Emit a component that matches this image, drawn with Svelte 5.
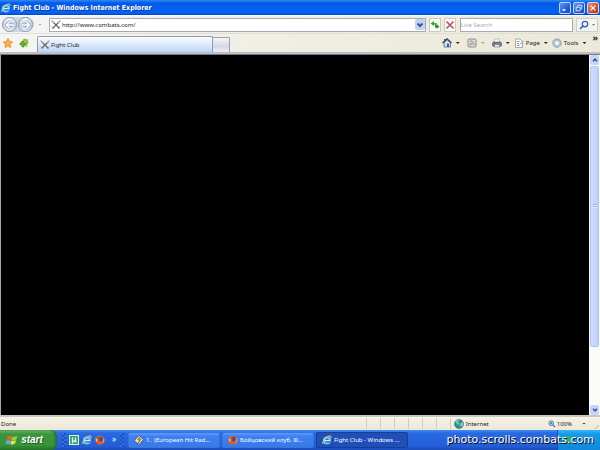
<script lang="ts">
  let address = $state("http://www.combats.com/");
  let query = $state("");

  const panes = [1, 2, 3, 4, 5, 6];

  const tasks = [
    { icon: "player", label: "1.  (European Hit Rad...", active: false },
    { icon: "fox", label: "Бойцовский клуб. Ф...", active: false },
    { icon: "ie", label: "Fight Club - Windows ...", active: true },
  ];
</script>

{#snippet icon(name: string)}
  <svg class="icon" viewBox="0 0 20 20" aria-hidden="true">
    {#if name === "ie"}
      <circle cx="10" cy="11" r="6" fill="none" stroke="#6cc5f5" stroke-width="4" />
      <path d="M5 11h11" stroke="#c9efff" stroke-width="3" />
      <path d="M12 14h6" stroke="#1c5fd0" stroke-width="2" />
      <path d="M2 18C-1 14 9 1 17 2c3 1 1 4 0 5" fill="none" stroke="#f2d65a" stroke-width="2" />
    {:else if name === "swords"}
      <path d="M2 2l15 15M18 2L3 17" stroke="#66655c" stroke-width="2.4" />
      <path d="M1 13l5 5M14 18l5-5" stroke="#a39b80" stroke-width="2" />
      <path d="M1 1l5 5M19 1l-5 5" stroke="#a9a99f" stroke-width="2" />
    {:else if name === "fox"}
      <circle cx="10" cy="10" r="9" fill="#e4671b" />
      <circle cx="11" cy="8" r="5" fill="#3d55a5" />
      <path d="M2 4c1 3 4 2 7 4-3 0-3 4 0 5s6 0 8-5c2 6-2 11-8 11S-1 12 2 4z" fill="#e9571c" />
      <path d="M2 5c0 3 2 4 4 4l-2 5C1 12 1 8 2 5zM17 5c3 5 1 10-2 12 2-4 2-7 2-12z" fill="#ffc044" />
    {:else if name === "player"}
      <path d="M10 1l9 8-9 10-9-8z" fill="#f0eadb" stroke="#534b43" stroke-width="1.5" />
      <path d="M12 3L7 10h4l-3 7 7-9h-4z" fill="#ed9c22" stroke="#6e4b25" />
    {:else if name === "flag"}
      <path d="M3 4c3-2 5-1 7 0L8 10c-2-1-4-1-7 0z" fill="#ee6332" />
      <path d="M11 4c3 1 5 1 8-1l-2 6c-3 2-5 2-8 1z" fill="#8dd64a" />
      <path d="M1 11c3-1 5-1 7 0l-2 6c-2-1-4-1-6 0z" fill="#6ba9f5" />
      <path d="M9 11c3 1 5 1 8-1l-2 6c-3 2-5 2-8 1z" fill="#fbd743" />
    {:else if name === "star"}
      <path d="M10 1l3 6 6 1-5 5 1 6-5-3-6 3 1-6-4-5 6-1z" fill="#ffb53b" stroke="#d9811b" stroke-width="1.5" />
    {:else if name === "addstar"}
      <path d="M12 1l2 6 5 1-4 4 1 6-5-3-5 3 1-6-4-4 6-1z" fill="#f3cb46" stroke="#b1a12b" />
      <path d="M6 6v4H2v4h4v4h4v-4h4v-4h-4V6z" fill="#55b72e" stroke="#338a22" />
      <path d="M8 4h8v9" fill="none" stroke="#6cc13b" stroke-width="3" />
    {:else if name === "home"}
      <path d="M4 9v9h13V8l-6-5z" fill="#d6e1f2" stroke="#46608c" stroke-width="1.5" />
      <path d="M1 10l9-8 9 8" fill="none" stroke="#34496e" stroke-width="3" />
      <path d="M4 2h3v5H4z" fill="#445b83" />
      <path d="M10 11h4v7h-4z" fill="#405b91" />
    {:else if name === "feed"}
      <rect x="2" y="2" width="16" height="16" rx="2" fill="#dedfda" stroke="#8b8e8b" stroke-width="2" />
      <path d="M6 6c5 0 8 3 8 8M6 10c3 0 4 2 4 4" fill="none" stroke="#858885" stroke-width="2" />
      <circle cx="6.5" cy="14" r="1.5" fill="#858885" />
    {:else if name === "print"}
      <path d="M5 2h9l1 7H4z" fill="#fff" stroke="#858f9e" />
      <path d="M2 8h16l2 6-3 3H3l-3-3z" fill="#777f8c" stroke="#424a57" />
      <path d="M5 13h10v5H5z" fill="#e6ebf3" stroke="#596273" />
    {:else if name === "page"}
      <path d="M3 2h9l5 5v12H3z" fill="#fafbf9" stroke="#899397" stroke-width="1.5" />
      <path d="M6 7h5M6 11h4M6 15h5" stroke="#839bb5" stroke-width="2" />
      <path d="M19 5l-7 8" stroke="#899aac" stroke-width="2" />
    {:else if name === "gear"}
      <circle cx="10" cy="10" r="7" fill="#e5ebf2" stroke="#a3b4c6" stroke-width="3.5" />
      <circle cx="10" cy="10" r="9" fill="none" stroke="#8c9bad" stroke-width="1.5" stroke-dasharray="3 2" />
      <circle cx="10" cy="10" r="4" fill="#fff" stroke="#a4b1be" />
    {:else if name === "globe"}
      <circle cx="10" cy="10" r="9" fill="#2e89ae" stroke="#2a5f82" />
      <path d="M3 5c3-4 8-3 8-2L8 6l3 3-3 3-4-4zM13 8l5-2v7l-4 3-3-4z" fill="#7dc997" />
    {:else if name === "zoom"}
      <circle cx="8" cy="8" r="6" fill="#c8e0f8" stroke="#426b9f" stroke-width="2" />
      <path d="M12 12l6 6" stroke="#526381" stroke-width="3" />
      <path d="M8 5v6M5 8h6" stroke="#2460b0" stroke-width="2" />
    {:else if name === "search"}
      <circle cx="12" cy="8" r="5.5" fill="#edf6ff" stroke="#2b65b4" stroke-width="2.5" />
      <path d="M8 12l-6 6" stroke="#2b65b4" stroke-width="3.5" />
    {:else if name === "refresh"}
      <path d="M8 2L1 7l7 5V9h2v3h3V6H8z" fill="#38a13a" />
      <path d="M13 8l6 5-6 5v-3h-3v-3h3z" fill="#288931" />
    {:else if name === "stop"}
      <path d="M3 3l14 14M17 3L3 17" stroke="#bd4660" stroke-width="3" />
    {:else if name === "torrent"}
      <rect x="1" y="1" width="18" height="18" fill="#35a467" stroke="#d8f5db" stroke-width="2" />
      <path d="M7 5v12M7 12h6M13 5v8h2" fill="none" stroke="#fff" stroke-width="2.5" />
    {:else if name === "down"}
      <path d="M5 7l5 5 5-5" fill="none" stroke="#3f5789" stroke-width="4" />
    {:else if name === "up"}
      <path d="M5 13l5-5 5 5" fill="none" stroke="#3f5789" stroke-width="4" />
    {:else if name === "back"}
      <path d="M10 3l-7 7 7 7M4 10h14" fill="none" stroke="#8fa3bf" stroke-width="6" />
      <path d="M10 3l-7 7 7 7M4 10h14" fill="none" stroke="#fff" stroke-width="3" />
    {:else if name === "forward"}
      <path d="M10 3l7 7-7 7M16 10H2" fill="none" stroke="#8fa3bf" stroke-width="6" />
      <path d="M10 3l7 7-7 7M16 10H2" fill="none" stroke="#fff" stroke-width="3" />
    {:else if name === "minimize"}
      <path d="M4 15h7" stroke="#fff" stroke-width="4" />
    {:else if name === "restore"}
      <path d="M7 6V3h10v9h-3M3 8h10v9H3z" fill="none" stroke="#fff" stroke-width="2" />
    {:else if name === "close"}
      <path d="M4 4l12 12M16 4L4 16" stroke="#fff" stroke-width="3" />
    {/if}
  </svg>
{/snippet}

<div class="desktop">
  <header class="titlebar">
    {@render icon("ie")}
    <h1>Fight Club - Windows Internet Explorer</h1>
    <div class="window-buttons">
      <button aria-label="Minimize">{@render icon("minimize")}</button>
      <button aria-label="Restore">{@render icon("restore")}</button>
      <button class="close" aria-label="Close">{@render icon("close")}</button>
    </div>
  </header>

  <div class="chrome">
    <div class="navigation">
      <div class="history">
        <button aria-label="Back">{@render icon("back")}</button>
        <button aria-label="Forward">{@render icon("forward")}</button>
      </div>
      <button class="arrow pale" aria-label="Recent pages"></button>
      <div class="field address">
        {@render icon("swords")}
        <input aria-label="Address" bind:value={address} />
        <button class="drop" aria-label="Show addresses">{@render icon("down")}</button>
      </div>
      <button class="square" aria-label="Refresh">{@render icon("refresh")}</button>
      <button class="square" aria-label="Stop">{@render icon("stop")}</button>
      <div class="field search">
        <input aria-label="Live Search" placeholder="Live Search" bind:value={query} />
      </div>
      <div class="go">
        <button aria-label="Search">{@render icon("search")}</button>
        <button class="arrow" aria-label="Search options"></button>
      </div>
    </div>

    <div class="tabs">
      <div class="favorites">
        <button aria-label="Favorites">{@render icon("star")}</button>
        <button aria-label="Add to favorites">{@render icon("addstar")}</button>
      </div>
      <button class="tab">{@render icon("swords")}Fight Club</button>
      <button class="new-tab" aria-label="New tab"></button>
      <div class="commands">
        <button aria-label="Home">{@render icon("home")}<i class="arrow"></i></button>
        <button aria-label="Feeds">{@render icon("feed")}<i class="arrow pale"></i></button>
        <button aria-label="Print">{@render icon("print")}<i class="arrow"></i></button>
        <button class="named">{@render icon("page")}Page<i class="arrow"></i></button>
        <button class="named">{@render icon("gear")}Tools<i class="arrow"></i></button>
      </div>
      <button class="more" aria-label="More commands">»</button>
    </div>
  </div>

  <div class="view">
    <main aria-label="Fight Club"></main>
    <div class="scrollbar">
      <button aria-label="Scroll up">{@render icon("up")}</button>
      <div class="track"><div class="thumb"><span></span></div></div>
      <button aria-label="Scroll down">{@render icon("down")}</button>
    </div>
  </div>

  <div class="status">
    <span class="message">Done</span>
    {#each panes as pane (pane)}
      <span class="pane"></span>
    {/each}
    <span class="zone">{@render icon("globe")}Internet</span>
    <button class="zoom">{@render icon("zoom")}100%<i class="arrow"></i></button>
    <span class="resize"></span>
  </div>

  <footer class="taskbar">
    <button class="start">{@render icon("flag")}start</button>
    <span class="grip"></span>
    <div class="quick">
      <button aria-label="Torrent">{@render icon("torrent")}</button>
      <button aria-label="Internet Explorer">{@render icon("ie")}</button>
      <button aria-label="Firefox">{@render icon("fox")}</button>
      <button class="chevron" aria-label="More programs">»</button>
    </div>
    <span class="grip"></span>
    <div class="tasks">
      {#each tasks as task (task.label)}
        <button class="task" class:active={task.active}>
          {@render icon(task.icon)}<span>{task.label}</span>
        </button>
      {/each}
    </div>
    <div class="tray"><span></span></div>
    <span class="watermark">photo.scrolls.combats.com</span>
  </footer>
</div>

<style>
  :global(body) {
    margin: 0;
  }

  .desktop {
    display: flex;
    flex-direction: column;
    min-height: 100vh;
    font: 6px/8px "Noto Sans", sans-serif;
    color: #20201e;
    background: #eeebdc;
  }

  .desktop * {
    box-sizing: border-box;
  }

  button,
  input {
    margin: 0;
    padding: 0;
    border: 0;
    font: inherit;
    color: inherit;
    background: none;
  }

  button {
    display: flex;
    align-items: center;
    justify-content: center;
    flex: none;
    white-space: nowrap;
  }

  input {
    flex: 1;
    min-width: 0;
    height: 10px;
    outline: 0;
  }

  .icon {
    display: block;
    flex: none;
    width: 10px;
    height: 10px;
  }

  .arrow {
    flex: none;
    width: 4px;
    height: 2px;
    background: #292929;
    clip-path: polygon(0 0, 100% 0, 50% 100%);
  }

  .pale {
    background: #a5a5a0;
  }

  .titlebar {
    display: flex;
    align-items: center;
    gap: 2px;
    height: 15px;
    padding: 0 1px;
    color: #fff;
    background: linear-gradient(#2d8bf8, #0559e4 20%, #0561f3 65%, #0561f7 88%, #0341b8);
  }

  h1 {
    flex: 1;
    margin: 0;
    font: bold 7px/10px "DejaVu Sans Condensed", "DejaVu Sans", sans-serif;
    text-shadow: 1px 1px #0b3c9b;
  }

  .window-buttons {
    display: flex;
    gap: 2px;
  }

  .window-buttons button {
    width: 12px;
    height: 12px;
    border: 1px solid #c1d5fa;
    border-radius: 2px;
    background: linear-gradient(135deg, #659af5, #245fd9 60%, #1649bb);
  }

  .window-buttons .icon {
    width: 8px;
    height: 8px;
  }

  .window-buttons .close {
    background: linear-gradient(135deg, #ef9878, #db4b26 60%, #b9330d);
  }

  .chrome {
    border-bottom: 1px solid #777b80;
    background: linear-gradient(90deg, #f4f4f3, #efeddf 60%, #ece9d8);
  }

  .navigation {
    display: flex;
    align-items: center;
    gap: 3px;
    height: 19px;
    padding: 0 2px;
    border-top: 1px solid #f9faff;
    border-bottom: 1px solid #dedfda;
  }

  .history {
    display: flex;
    gap: 1px;
    padding-right: 1px;
    border-radius: 8px;
    background: #cbd4df;
  }

  .history button {
    width: 15px;
    height: 15px;
    border: 1px solid #8f9bad;
    border-radius: 50%;
    background: linear-gradient(#f4f8fd, #c3d2e5 50%, #e2ecf8);
  }

  .history + .arrow {
    margin: 0 4px 0 1px;
  }

  .field {
    display: flex;
    align-items: center;
    height: 14px;
    border: 1px solid #a4abad;
    background: #fff;
  }

  .address {
    flex: 1;
    gap: 1px;
    padding-left: 1px;
  }

  .drop {
    width: 10px;
    height: 11px;
    border-radius: 2px;
    background: #bfd2f8;
  }

  .square {
    width: 12px;
    height: 14px;
    border: 1px solid #c9cac3;
    background: #fafaf7;
  }

  .search {
    width: 19%;
    margin-left: 1px;
  }

  .search input::placeholder {
    color: #aaa;
    opacity: 1;
  }

  .go {
    display: flex;
    align-items: center;
    justify-content: space-around;
    width: 22px;
    height: 14px;
    border: 1px solid #c9d0d1;
    background: #f4f5f1;
  }

  .go .arrow {
    background: #3d71b6;
  }

  .tabs {
    display: flex;
    align-items: flex-end;
    height: 20px;
    padding-right: 2px;
    border-bottom: 2px solid #bbc1c8;
  }

  .favorites {
    display: flex;
    align-self: center;
    gap: 6px;
    width: 37px;
    padding-left: 3px;
  }

  .tab {
    justify-content: flex-start;
    gap: 1px;
    width: 176px;
    height: 16px;
    padding-left: 2px;
    border: 1px solid #8e9bad;
    border-bottom: 0;
    border-radius: 2px 2px 0 0;
    background: linear-gradient(#fafcff, #dce9fb 50%, #bcd5f6);
  }

  .new-tab {
    width: 17px;
    height: 15px;
    border: 1px solid #9ca1ab;
    border-left: 0;
    border-bottom: 0;
    border-radius: 0 2px 0 0;
    background: linear-gradient(#f5f5f8, #d5d7e3 60%, #edeef4);
  }

  .commands {
    display: flex;
    align-items: center;
    align-self: center;
    justify-content: flex-end;
    flex: 1;
    gap: 7px;
    padding-right: 6px;
  }

  .commands button {
    gap: 4px;
  }

  .commands .named {
    gap: 2px;
    margin-left: -3px;
  }

  .named .arrow {
    margin-left: 2px;
  }

  .more {
    align-self: flex-start;
    font-size: 9px;
    font-weight: bold;
  }

  .view {
    display: flex;
    flex: 1;
    border-left: 1px solid #a5a69d;
    background: #000;
  }

  main {
    flex: 1;
  }

  .scrollbar {
    display: flex;
    flex-direction: column;
    width: 11px;
    padding: 0 1px;
    background: #fbfbf8;
  }

  .scrollbar button {
    height: 10px;
    border-radius: 2px;
    background: #c5d5fa;
  }

  .scrollbar .icon {
    width: 8px;
    height: 8px;
  }

  .track {
    flex: 1;
    padding: 1px 0;
  }

  .thumb {
    display: flex;
    align-items: center;
    justify-content: center;
    height: 83%;
    border: 1px solid #b2c5ef;
    border-radius: 2px;
    background: linear-gradient(90deg, #d0ddff, #bdcffb);
  }

  .thumb span {
    width: 4px;
    height: 4px;
    background: repeating-linear-gradient(#96afe4 0 1px, #e4edff 1px 2px);
  }

  .status {
    display: flex;
    align-items: center;
    height: 15px;
    border-top: 2px solid #cac8ba;
    background: linear-gradient(#f5f2e7, #ece9d8);
  }

  .message {
    flex: 1;
    padding-left: 1px;
  }

  .pane {
    width: 14px;
    height: 11px;
    border-left: 1px solid #d0cdbd;
  }

  .zone {
    display: flex;
    align-items: center;
    gap: 2px;
    width: 98px;
    padding-left: 3px;
    border-left: 1px solid #d0cdbd;
  }

  .zoom {
    gap: 1px;
  }

  .zoom .icon {
    width: 8px;
    height: 8px;
  }

  .zoom .arrow {
    margin-left: 9px;
  }

  .resize {
    width: 6px;
    height: 6px;
    margin: 5px 1px 0 7px;
    background: repeating-linear-gradient(135deg, transparent 0 2px, #b8b5a5 2px 3px);
    clip-path: polygon(100% 0, 100% 100%, 0 100%);
  }

  .taskbar {
    position: relative;
    display: flex;
    align-items: center;
    height: 20px;
    color: #fff;
    background: linear-gradient(#4a8bf0, #286ae3 15%, #245dd7 80%, #1d4eb7);
  }

  .start {
    gap: 3px;
    width: 57px;
    height: 20px;
    padding-right: 8px;
    border-radius: 0 6px 6px 0;
    font: italic bold 10px/12px "Liberation Sans", sans-serif;
    text-shadow: 1px 1px #245423;
    background: linear-gradient(#6cba69, #3c943d 20%, #369538 75%, #277129);
    box-shadow: inset -2px 0 2px #25702c;
  }

  .start .icon {
    width: 12px;
    height: 12px;
  }

  .grip {
    width: 4px;
    height: 14px;
    background: repeating-conic-gradient(#1b50b8 0 25%, #3070df 0 50%) 0 0 / 4px 4px;
  }

  .start + .grip {
    margin: 0 3px 0 5px;
  }

  .quick {
    display: flex;
    align-items: center;
    gap: 3px;
    width: 51px;
  }

  .chevron {
    align-self: flex-start;
    margin-left: 4px;
    font-size: 8px;
  }

  .tasks {
    display: flex;
    flex: 1;
    gap: 2px;
    min-width: 0;
    margin-left: 4px;
  }

  .task {
    justify-content: flex-start;
    flex: 0 1 92px;
    gap: 2px;
    min-width: 0;
    height: 16px;
    padding-left: 5px;
    border: 1px solid #3874dc;
    border-radius: 2px;
    background: linear-gradient(#5b9aff, #3c80f1 25%, #3779e9);
  }

  .task span {
    overflow: hidden;
    white-space: pre;
  }

  .task.active {
    border-color: #173f98;
    background: #1e50b8;
  }

  .tray {
    display: flex;
    align-items: center;
    width: 43px;
    height: 20px;
    padding-left: 6px;
    border-left: 1px solid #164cad;
    background: linear-gradient(#38b4f4, #149bea 20%, #1287d9);
  }

  .tray span {
    width: 8px;
    height: 8px;
    border-radius: 50%;
    background: #36a978;
  }

  .watermark {
    position: absolute;
    right: 6px;
    top: 3px;
    font: 11px/14px "DejaVu Sans", sans-serif;
    text-shadow: 1px 1px #000;
  }
</style>
